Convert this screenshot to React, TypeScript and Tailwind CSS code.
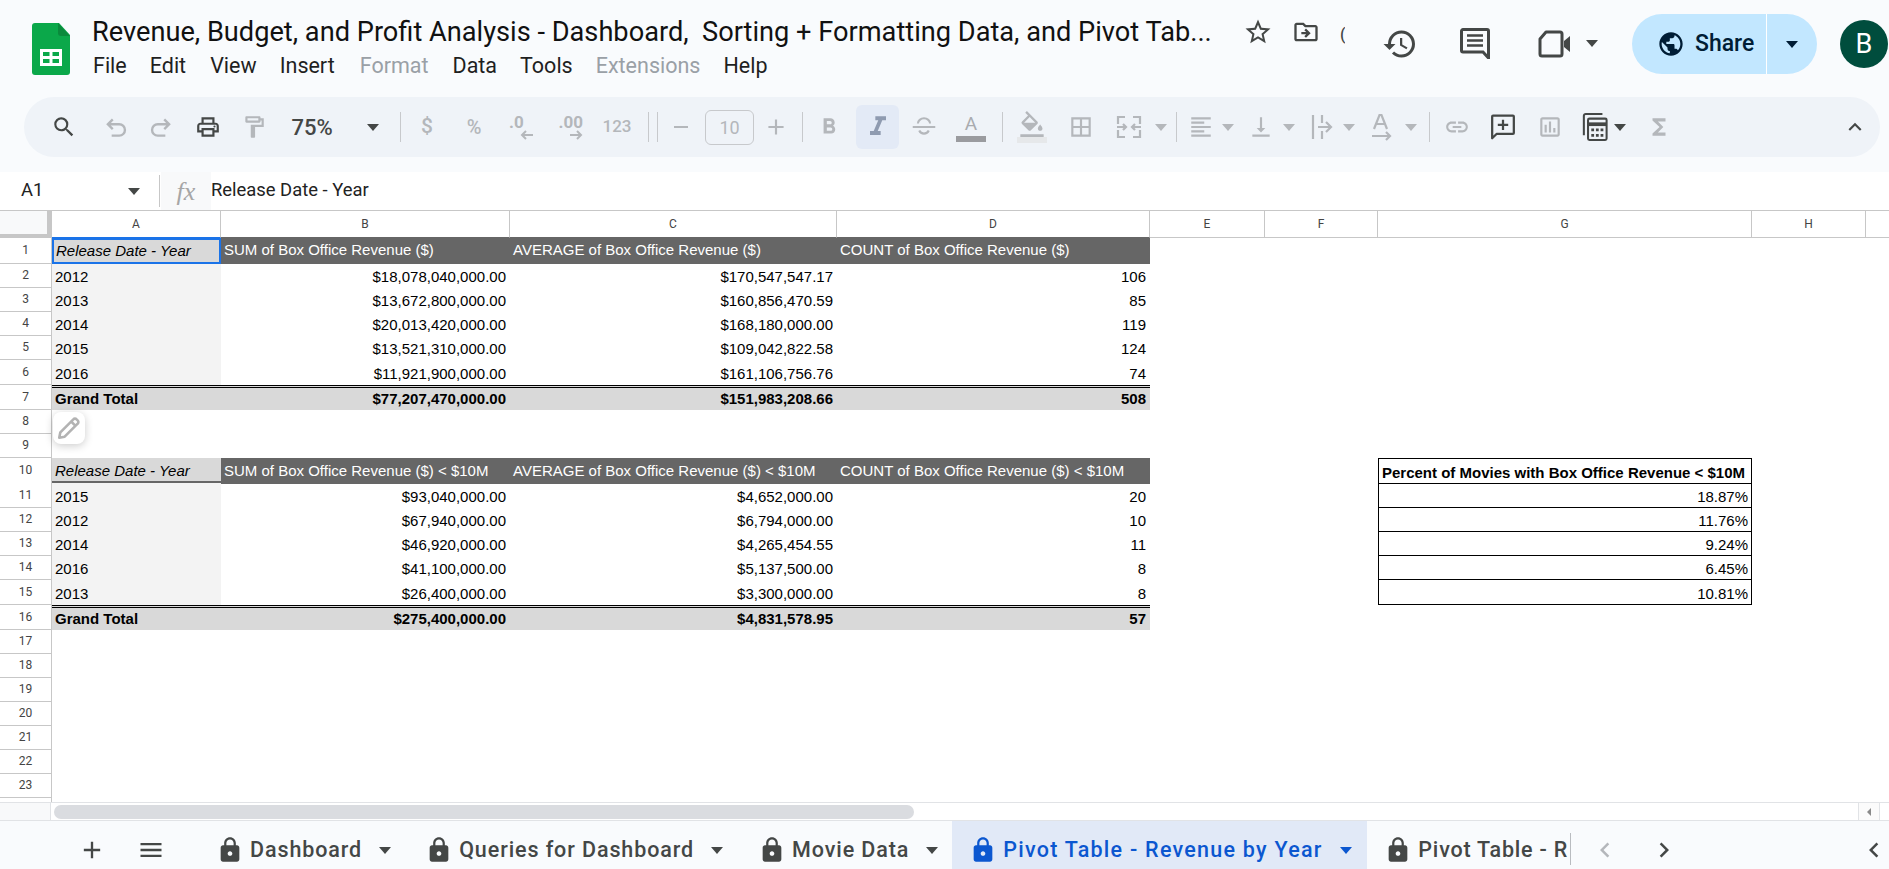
import type { ReactNode } from 'react';
import {
  MdAdd,
  MdChevronLeft,
  MdChevronRight,
  MdExpandLess,
  MdFormatAlignLeft,
  MdFormatBold,
  MdFormatColorFill,
  MdFormatItalic,
  MdFunctions,
  MdHistory,
  MdLink,
  MdLock,
  MdMenu,
  MdOutlineBorderAll,
  MdOutlineDriveFileMove,
  MdOutlineFormatPaint,
  MdOutlineInsertChart,
  MdOutlinePrint,
  MdOutlineStarBorder,
  MdPublic,
  MdSearch,
  MdVerticalAlignBottom,
} from 'react-icons/md';

const gridCols = 'grid grid-cols-[52px_169px_289px_327px_313px_115px_113px_374px_114px_1fr]';
const cellFont = "font-['Liberation_Sans',Arial,sans-serif] text-[15px] leading-[20px]";

function Caret({ className = '', color = 'border-t-[#b4b7bb]' }: { className?: string; color?: string }) {
  return (
    <span
      className={`h-0 w-0 shrink-0 border-x-[6px] border-t-[7px] border-x-transparent ${color} ${className}`}
    />
  );
}

function Sep({ className }: { className: string }) {
  return <span className={`h-[30px] w-px shrink-0 bg-[#c7c9cc] ${className}`} />;
}

function Tool({ className, children }: { className: string; children: ReactNode }) {
  return (
    <span className={`flex h-[44px] w-[26px] shrink-0 items-center justify-center ${className}`}>
      {children}
    </span>
  );
}

function SheetsLogo() {
  return (
    <svg width="38" height="52" viewBox="0 0 38 52" className="shrink-0">
      <path d="M3 0h24l11 12v37a3 3 0 0 1-3 3H3a3 3 0 0 1-3-3V3a3 3 0 0 1 3-3z" fill="#0ba84a" />
      <path d="M26 0l12 13H29a3 3 0 0 1-3-3z" fill="#0a8a3c" />
      <path
        d="M8 26h22v17H8zm3 3v4h6.500v-4zm9.500 0v4H27v-4zM11 36v4h6.500v-4zm9.500 0v4H27v-4z"
        fill="#fff"
        fillRule="evenodd"
      />
    </svg>
  );
}

function MeetIcon() {
  return (
    <svg width="34" height="28" viewBox="0 0 34 28" fill="none" stroke="#444746" strokeWidth="3">
      <path d="M9 2h14a2 2 0 0 1 2 2v20a2 2 0 0 1-2 2H5a2 2 0 0 1-2-2V9z" strokeLinejoin="round" />
      <path d="M27 11l6-5v16l-6-5z" fill="#444746" stroke="none" />
    </svg>
  );
}

function CommentIcon() {
  return (
    <svg width="30" height="31" viewBox="0 0 30 31" fill="none">
      <path
        d="M3 1.500h24a1.500 1.500 0 0 1 1.500 1.500v27L23 24H3a1.500 1.500 0 0 1-1.500-1.500V3A1.500 1.500 0 0 1 3 1.500z"
        stroke="#444746"
        strokeWidth="3"
      />
      <path d="M7 7.500h16M7 12.500h16M7 17.500h16" stroke="#444746" strokeWidth="2.500" />
    </svg>
  );
}

function UndoIcon({ flip = false }: { flip?: boolean }) {
  return (
    <svg
      width="26"
      height="26"
      viewBox="0 0 24 24"
      fill="none"
      stroke="#b4b7bb"
      strokeWidth="2.200"
      className={flip ? '-scale-x-100' : ''}
    >
      <path d="M9 5L4.500 9.500 9 14M4.500 9.500H15a5 5 0 0 1 0 10.500H8" />
    </svg>
  );
}

function StrikeIcon() {
  return (
    <svg width="30" height="30" viewBox="0 0 30 30" fill="none" stroke="#b4b7bb" strokeWidth="2.400">
      <path d="M2 15h26M8 11a7 6 0 0 1 14 0M9.500 19a6 6 0 0 0 11 0" />
    </svg>
  );
}

function MergeIcon() {
  return (
    <svg width="26" height="26" viewBox="0 0 26 26" fill="none" stroke="#b4b7bb" strokeWidth="2.200">
      <path d="M9 3H2v7M2 16v7h7M17 3h7v7M24 16v7h-7" />
      <path d="M1 13h9M7 10l3 3-3 3M25 13h-9M19 10l-3 3 3 3" />
    </svg>
  );
}

function WrapIcon() {
  return (
    <svg width="26" height="28" viewBox="0 0 26 28" fill="none" stroke="#b4b7bb" strokeWidth="2.200">
      <path d="M4 2v24M13 2v8M13 18v8M9 14h13M17 9l5 5-5 5" />
    </svg>
  );
}

function RotateIcon() {
  return (
    <svg width="26" height="28" viewBox="0 0 26 28" fill="none" stroke="#b4b7bb" strokeWidth="2.200">
      <path d="M5 16l5.500-14h2L18 16M7 11h9.500M3 23h17M17 19l4 4-4 4" />
    </svg>
  );
}

function AddCommentIcon() {
  return (
    <svg width="30" height="30" viewBox="0 0 30 30" fill="none" stroke="#444746" strokeWidth="2.600">
      <path d="M2.500 3a1 1 0 0 1 1-1h23a1 1 0 0 1 1 1v19a1 1 0 0 1-1 1H7.500l-5 5z" strokeLinejoin="round" />
      <path d="M9 12.500h12M15 6.500v12" />
    </svg>
  );
}

function CalcIcon() {
  return (
    <svg width="28" height="30" viewBox="0 0 28 30" fill="none" stroke="#444746" strokeWidth="2.200">
      <path d="M2 24V3a2 2 0 0 1 2-2h18" />
      <rect x="6.500" y="6" width="20" height="23" rx="1.500" />
      <path d="M7 12h19" strokeWidth="4" />
      <path d="M10 18h3M15 18h3M20 18h3M10 24h3M15 24h3M20 24h3" strokeWidth="3" />
    </svg>
  );
}

function DecimalTool({ className, label, left }: { className: string; label: string; left?: boolean }) {
  return (
    <span
      className={`flex h-[44px] w-[26px] shrink-0 flex-col items-end justify-center font-['Roboto',sans-serif] text-[17px] font-bold leading-[16px] ${className}`}
    >
      <span className={left ? 'self-start pl-[2px]' : ''}>{label}</span>
      <svg width="13" height="10" viewBox="0 0 13 10" fill="none" stroke="#b4b7bb" strokeWidth="2">
        <path d={left ? 'M13 5H2M6 1L2 5l4 4' : 'M0 5h11M7 1l4 4-4 4'} />
      </svg>
    </span>
  );
}

function Toolbar() {
  return (
    <div className="flex h-[75px] shrink-0 items-start">
      <div className="ml-[24px] mr-[9px] flex h-[60px] flex-1 items-center rounded-[30px] bg-[#eff3f8] pr-[12px] text-[#b4b7bb]">
        <span className="ml-[27px] flex h-[44px] w-[26px] shrink-0 items-center justify-center text-[#444746]">
          <MdSearch size={34} />
        </span>
        <Tool className="ml-[26px]"><UndoIcon /></Tool>
        <Tool className="ml-[19px]"><UndoIcon flip /></Tool>
        <Tool className="ml-[21px] text-[#444746]"><MdOutlinePrint size={32} /></Tool>
        <Tool className="ml-[20px]"><MdOutlineFormatPaint size={30} /></Tool>
        <span className="ml-[20px] w-[50px] shrink-0 text-center font-['Roboto',sans-serif] text-[22px] font-medium text-[#444746]">
          75%
        </span>
        <Caret className="ml-[30px]" color="border-t-[#444746]" />
        <Sep className="ml-[21px]" />
        <Tool className="ml-[13px] font-['Roboto',sans-serif] text-[21px] font-medium">$</Tool>
        <Tool className="ml-[21px] font-['Roboto',sans-serif] text-[20px] font-medium">%</Tool>
        <DecimalTool className="ml-[20px]" label=".0" left />
        <DecimalTool className="ml-[24px]" label=".00" />
        <Tool className="ml-[21px] font-['Roboto',sans-serif] text-[17px] font-medium">123</Tool>
        <Sep className="ml-[18px]" />
        <Sep className="ml-[8px]" />
        <Tool className="ml-[10px]"><span className="h-[2.500px] w-[14px] bg-[#b4b7bb]" /></Tool>
        <span className="ml-[11px] flex h-[35px] w-[49px] shrink-0 items-center justify-center rounded-[6px] border border-[#c7c9cc] font-['Roboto',sans-serif] text-[18px]">
          10
        </span>
        <Tool className="ml-[9px]"><MdAdd size={28} /></Tool>
        <Sep className="ml-[13px]" />
        <Tool className="ml-[13px]"><MdFormatBold size={34} /></Tool>
        <span className="ml-[14px] flex h-[44px] w-[43px] shrink-0 items-center justify-center rounded-[6px] bg-[#e3eaf6] text-[#8f9bb0]">
          <MdFormatItalic size={32} />
        </span>
        <Tool className="ml-[12px]"><StrikeIcon /></Tool>
        <span className="ml-[19px] flex w-[30px] shrink-0 flex-col items-center">
          <span className="font-['Roboto',sans-serif] text-[19px] leading-[22px] text-[#a9abaf]">A</span>
          <span className="mt-[1px] h-[6px] w-[30px] bg-[#9a9b9f]" />
        </span>
        <Sep className="ml-[16px]" />
        <span className="ml-[14px] flex w-[30px] shrink-0 flex-col items-center">
          <MdFormatColorFill size={28} className="-mb-[2px]" />
          <span className="h-[6px] w-[30px] bg-[#e6e8ea]" />
        </span>
        <Tool className="ml-[21px]"><MdOutlineBorderAll size={30} /></Tool>
        <Tool className="ml-[22px]"><MergeIcon /></Tool>
        <Caret className="ml-[13px]" />
        <Sep className="ml-[9px]" />
        <Tool className="ml-[11px]"><MdFormatAlignLeft size={30} /></Tool>
        <Caret className="ml-[8px]" />
        <Tool className="ml-[14px]"><MdVerticalAlignBottom size={28} /></Tool>
        <Caret className="ml-[9px]" />
        <Tool className="ml-[14px]"><WrapIcon /></Tool>
        <Caret className="ml-[8px]" />
        <Tool className="ml-[14px]"><RotateIcon /></Tool>
        <Caret className="ml-[10px]" />
        <Sep className="ml-[12px]" />
        <Tool className="ml-[14px]"><MdLink size={30} /></Tool>
        <Tool className="ml-[20px]"><AddCommentIcon /></Tool>
        <Tool className="ml-[21px]"><MdOutlineInsertChart size={30} /></Tool>
        <Tool className="ml-[19px]"><CalcIcon /></Tool>
        <Caret className="ml-[6px]" color="border-t-[#444746]" />
        <Tool className="ml-[20px]"><MdFunctions size={30} /></Tool>
        <Tool className="ml-auto text-[#444746]"><MdExpandLess size={30} /></Tool>
      </div>
    </div>
  );
}

function Header() {
  return (
    <div className="flex h-[97px] shrink-0 font-['Roboto',sans-serif]">
      <div className="ml-[32px] mt-[23px]">
        <SheetsLogo />
      </div>
      <div className="ml-[22px] mt-[15px] w-[1140px] shrink-0">
        <div className="whitespace-pre text-[27.2px] leading-[35px] text-[#111]">
          Revenue, Budget, and Profit Analysis - Dashboard,  Sorting + Formatting Data, and Pivot Tab...
        </div>
        <div className="mt-[1px] flex text-[21.5px] leading-[30px] text-[#1f1f1f]">
          <span className="ml-[1px]">File</span>
          <span className="ml-[23px]">Edit</span>
          <span className="ml-[24px]">View</span>
          <span className="ml-[23px]">Insert</span>
          <span className="ml-[25px] text-[#9aa0a6]">Format</span>
          <span className="ml-[24px]">Data</span>
          <span className="ml-[23px]">Tools</span>
          <span className="ml-[23px] text-[#9aa0a6]">Extensions</span>
          <span className="ml-[23px]">Help</span>
        </div>
      </div>
      <div className="flex items-start text-[#444746]">
        <span className="ml-[11px] mt-[17px] flex"><MdOutlineStarBorder size={30} /></span>
        <span className="ml-[19px] mt-[18px] flex"><MdOutlineDriveFileMove size={28} /></span>
        <span className="ml-[20px] mt-[25px] w-[5px] overflow-hidden text-[16px] font-medium leading-[20px]">(</span>
        <span className="ml-[37px] mt-[26px] flex"><MdHistory size={36} /></span>
        <span className="ml-[42px] mt-[28px] flex"><CommentIcon /></span>
        <span className="ml-[47px] mt-[30px] flex"><MeetIcon /></span>
        <Caret className="ml-[15px] mt-[40px]" color="border-t-[#444746]" />
        <div className="ml-[34px] mt-[14px] flex h-[60px] w-[185px] shrink-0 rounded-[30px] bg-[#c2e7ff] text-[#001d35]">
          <div className="flex w-[135px] items-center border-r border-white pl-[25px]">
            <MdPublic size={28} />
            <span className="ml-[10px] text-[23px] font-medium">Share</span>
          </div>
          <div className="flex flex-1 items-center justify-center">
            <Caret color="border-t-[#001d35]" />
          </div>
        </div>
        <div className="ml-[23px] mt-[20px] flex h-[48px] w-[48px] shrink-0 items-center justify-center rounded-full bg-[#004d3d] text-[27px] text-white">
          B
        </div>
      </div>
    </div>
  );
}

function FormulaBar() {
  return (
    <div className="flex h-[38px] shrink-0 items-center bg-white font-['Roboto',sans-serif] text-[18.4px] text-[#222]">
      <span className="ml-[21px] w-[107px] pb-[2px]">A1</span>
      <Caret color="border-t-[#444746]" />
      <span className="ml-[19px] h-[32px] w-px bg-[#c7c7c7]" />
      <span className="ml-[1px] flex h-full w-[50px] items-center justify-center bg-[#f8f9fa] font-['Liberation_Serif',serif] text-[26px] italic text-[#a6a6a6]">
        fx
      </span>
      <span className="pb-[3px]">Release Date - Year</span>
    </div>
  );
}

function GridRow({
  n,
  height,
  cells,
  g,
}: {
  n: number;
  height: string;
  cells?: ReactNode;
  g?: ReactNode;
}) {
  return (
    <div className={`${gridCols} ${height} shrink-0`}>
      <div className="flex items-center justify-center border-b border-r border-[#c7c7c7] bg-white pb-[1px] font-['Roboto',sans-serif] text-[12px] text-[#444]">
        {n}
      </div>
      {cells ?? (
        <>
          <div />
          <div />
          <div />
          <div />
        </>
      )}
      <div />
      <div />
      {g ?? <div />}
      <div />
      <div />
    </div>
  );
}

function Head({ text }: { text: string }) {
  return (
    <div className={`flex items-center overflow-hidden whitespace-nowrap bg-[#666666] pb-[2px] pl-[3px] text-white ${cellFont}`}>
      {text}
    </div>
  );
}

function HeadBar({ text }: { text: string }) {
  return (
    <div className={`flex items-center overflow-hidden whitespace-nowrap border-b-[3px] border-[#666666] bg-[#666666] pl-[3px] pt-[3px] text-white ${cellFont}`}>
      {text}
    </div>
  );
}

function DataCells({ values }: { values: string[] }) {
  return (
    <>
      <div className={`flex items-end bg-[#f3f3f3] pb-[1px] pl-[3px] text-black ${cellFont}`}>{values[0]}</div>
      {values.slice(1).map((value) => (
        <div key={value} className={`flex items-end justify-end pb-[1px] pr-[4px] text-black ${cellFont}`}>
          {value}
        </div>
      ))}
    </>
  );
}

function TotalCells({ values }: { values: string[] }) {
  return (
    <>
      <div className={`flex items-end border-t-[3px] border-double border-black bg-[#d9d9d9] pb-[1px] pl-[3px] font-bold text-black ${cellFont}`}>
        Grand Total
      </div>
      {values.map((value) => (
        <div
          key={value}
          className={`flex items-end justify-end border-t-[3px] border-double border-black bg-[#d9d9d9] pb-[1px] pr-[4px] font-bold text-black ${cellFont}`}
        >
          {value}
        </div>
      ))}
    </>
  );
}

function PercentCell({ value }: { value: string }) {
  return (
    <div className={`flex items-end justify-end border-x border-b border-black pr-[3px] text-black ${cellFont}`}>
      {value}
    </div>
  );
}

const columns = [
  { label: 'A', width: 'w-[169px]', line: 'border-b-[#1a73e8]' },
  { label: 'B', width: 'w-[289px]', line: 'border-b-[#666666]' },
  { label: 'C', width: 'w-[327px]', line: 'border-b-[#666666]' },
  { label: 'D', width: 'w-[313px]', line: 'border-b-[#666666]' },
  { label: 'E', width: 'w-[115px]', line: 'border-b-[#c7c7c7]' },
  { label: 'F', width: 'w-[113px]', line: 'border-b-[#c7c7c7]' },
  { label: 'G', width: 'w-[374px]', line: 'border-b-[#c7c7c7]' },
  { label: 'H', width: 'w-[114px]', line: 'border-b-[#c7c7c7]' },
];

const topRows = [
  ['2012', '$18,078,040,000.00', '$170,547,547.17', '106'],
  ['2013', '$13,672,800,000.00', '$160,856,470.59', '85'],
  ['2014', '$20,013,420,000.00', '$168,180,000.00', '119'],
  ['2015', '$13,521,310,000.00', '$109,042,822.58', '124'],
];

const lowRows = [
  { n: 11, h: 'h-[25px]', values: ['2015', '$93,040,000.00', '$4,652,000.00', '20'], pct: '18.87%' },
  { n: 12, h: 'h-[24px]', values: ['2012', '$67,940,000.00', '$6,794,000.00', '10'], pct: '11.76%' },
  { n: 13, h: 'h-[24px]', values: ['2014', '$46,920,000.00', '$4,265,454.55', '11'], pct: '9.24%' },
  { n: 14, h: 'h-[24px]', values: ['2016', '$41,100,000.00', '$5,137,500.00', '8'], pct: '6.45%' },
  { n: 15, h: 'h-[25px]', values: ['2013', '$26,400,000.00', '$3,300,000.00', '8'], pct: '10.81%' },
];

function Sheet() {
  return (
    <div className="relative flex h-[592px] shrink-0 flex-col overflow-hidden border-t border-[#c7c7c7] bg-white">
      <div className="flex h-[27px] shrink-0 font-['Roboto',sans-serif] text-[12px] text-[#444]">
        <div className="h-full w-[52px] shrink-0 border-b-[4px] border-r-[5px] border-[#c7c7c7] bg-[#f8f9fa]" />
        {columns.map((col) => (
          <div
            key={col.label}
            className={`flex shrink-0 items-center justify-center border-b border-r border-r-[#c7c7c7] ${col.width} ${col.line}`}
          >
            {col.label}
          </div>
        ))}
        <div className="flex-1 border-b border-[#c7c7c7]" />
      </div>

      <GridRow
        n={1}
        height="h-[26px]"
        cells={
          <>
            <div className={`flex items-center border-2 border-[#1a73e8] bg-[#d9d9d9] pb-[1px] pl-[2px] italic text-black ${cellFont}`}>
              Release Date - Year
            </div>
            <Head text="SUM of Box Office Revenue ($)" />
            <Head text="AVERAGE of Box Office Revenue ($)" />
            <Head text="COUNT of Box Office Revenue ($)" />
          </>
        }
      />
      {topRows.map((values, i) => (
        <GridRow key={values[0]} n={i + 2} height="h-[24px]" cells={<DataCells values={values} />} />
      ))}
      <GridRow
        n={6}
        height="h-[25px]"
        cells={<DataCells values={['2016', '$11,921,900,000.00', '$161,106,756.76', '74']} />}
      />
      <GridRow
        n={7}
        height="h-[25px]"
        cells={<TotalCells values={['$77,207,470,000.00', '$151,983,208.66', '508']} />}
      />
      <GridRow n={8} height="h-[24px]" />
      <GridRow n={9} height="h-[24px]" />
      <GridRow
        n={10}
        height="h-[25px]"
        cells={
          <>
            <div className={`flex items-center border-b-[3px] border-[#666666] bg-[#d9d9d9] pl-[3px] pt-[3px] italic text-black ${cellFont}`}>
              Release Date - Year
            </div>
            <HeadBar text="SUM of Box Office Revenue ($) < $10M" />
            <HeadBar text="AVERAGE of Box Office Revenue ($) < $10M" />
            <HeadBar text="COUNT of Box Office Revenue ($) < $10M" />
          </>
        }
        g={
          <div className={`flex items-end whitespace-nowrap border border-black pl-[3px] font-bold text-black ${cellFont}`}>
            Percent of Movies with Box Office Revenue &lt; $10M
          </div>
        }
      />
      {lowRows.map((row) => (
        <GridRow
          key={row.n}
          n={row.n}
          height={row.h}
          cells={<DataCells values={row.values} />}
          g={<PercentCell value={row.pct} />}
        />
      ))}
      <GridRow
        n={16}
        height="h-[25px]"
        cells={<TotalCells values={['$275,400,000.00', '$4,831,578.95', '57']} />}
      />
      {[17, 18, 19, 20, 21, 22, 23].map((n) => (
        <GridRow key={n} n={n} height="h-[24px]" />
      ))}
      <div className="w-[52px] flex-1 border-r border-[#c7c7c7]" />

      <div className="absolute left-[53px] top-[201px] flex h-[32px] w-[32px] items-center justify-center rounded-[8px] bg-white shadow-[0_2px_8px_rgba(0,0,0,0.2)]">
        <svg width="26" height="26" viewBox="0 0 24 24" fill="none" stroke="#b3b3b3" strokeWidth="2.400">
          <path d="M3 21l1-5L16 4a2 2 0 0 1 3 0l1 1a2 2 0 0 1 0 3L8 20zM14 6l4 4" strokeLinejoin="round" />
        </svg>
      </div>
    </div>
  );
}

function ScrollRow() {
  return (
    <div className="flex h-[19px] shrink-0 border-y border-[#e1e3e6] bg-white">
      <div className="w-[51px] border-r border-[#e1e3e6] bg-[#f8f9fa]" />
      <div className="flex flex-1 items-center pl-[3px]">
        <div className="h-[14px] w-[860px] rounded-[7px] bg-[#dadce0]" />
      </div>
      <div className="flex w-[22px] items-center justify-center border-l border-r border-[#e1e3e6] bg-[#fbfbfb]">
        <span className="h-0 w-0 border-y-[4px] border-r-[4px] border-y-transparent border-r-[#8a8a8a]" />
      </div>
      <div className="w-[9px]" />
    </div>
  );
}

function Tab({ label, className }: { label: string; className: string }) {
  return (
    <div className={`flex shrink-0 items-center pt-[10px] ${className}`}>
      <MdLock size={28} className="mx-[-4px]" />
      <span className="ml-[10px] whitespace-nowrap text-[21.500px] font-medium tracking-[0.9px]">{label}</span>
      <Caret className="ml-[17px]" color="border-t-[#444746]" />
    </div>
  );
}

function TabBar() {
  return (
    <div className="flex h-[48px] shrink-0 items-stretch bg-[#f9fbfd] font-['Roboto',sans-serif] text-[#444746]">
      <span className="ml-[78px] flex items-center pt-[10px]"><MdAdd size={28} /></span>
      <span className="ml-[31px] flex items-center pt-[10px]"><MdMenu size={28} /></span>
      <Tab label="Dashboard" className="ml-[55px]" />
      <Tab label="Queries for Dashboard" className="ml-[38px]" />
      <Tab label="Movie Data" className="ml-[39px]" />
      <div className="ml-[14px] flex w-[415px] shrink-0 items-center bg-[#e1e9f7] pl-[21px] pt-[10px] text-[#0b57d0]">
        <MdLock size={28} className="mx-[-4px]" />
        <span className="ml-[10px] whitespace-nowrap text-[21.500px] font-medium tracking-[1.25px]">
          Pivot Table - Revenue by Year
        </span>
        <Caret className="ml-[17px]" color="border-t-[#0b57d0]" />
      </div>
      <div className="flex w-[203px] shrink-0 items-center overflow-hidden pl-[21px] pt-[10px]">
        <MdLock size={28} className="mx-[-4px] shrink-0" />
        <span className="ml-[10px] whitespace-nowrap text-[21.500px] font-medium tracking-[0.8px]">Pivot Table - R</span>
      </div>
      <span className="mb-[4px] mt-[12px] w-px bg-[#b9bcc0]" />
      <span className="ml-[19px] flex items-center pt-[10px] text-[#b4b7bb]"><MdChevronLeft size={30} /></span>
      <span className="ml-[29px] flex items-center pt-[10px]"><MdChevronRight size={30} /></span>
      <span className="ml-[180px] flex items-center pt-[10px]"><MdChevronLeft size={30} /></span>
    </div>
  );
}

export default function App() {
  return (
    <div className="flex h-[869px] w-[1889px] flex-col overflow-hidden bg-[#f9fbfd]">
      <Header />
      <Toolbar />
      <FormulaBar />
      <Sheet />
      <ScrollRow />
      <TabBar />
    </div>
  );
}
